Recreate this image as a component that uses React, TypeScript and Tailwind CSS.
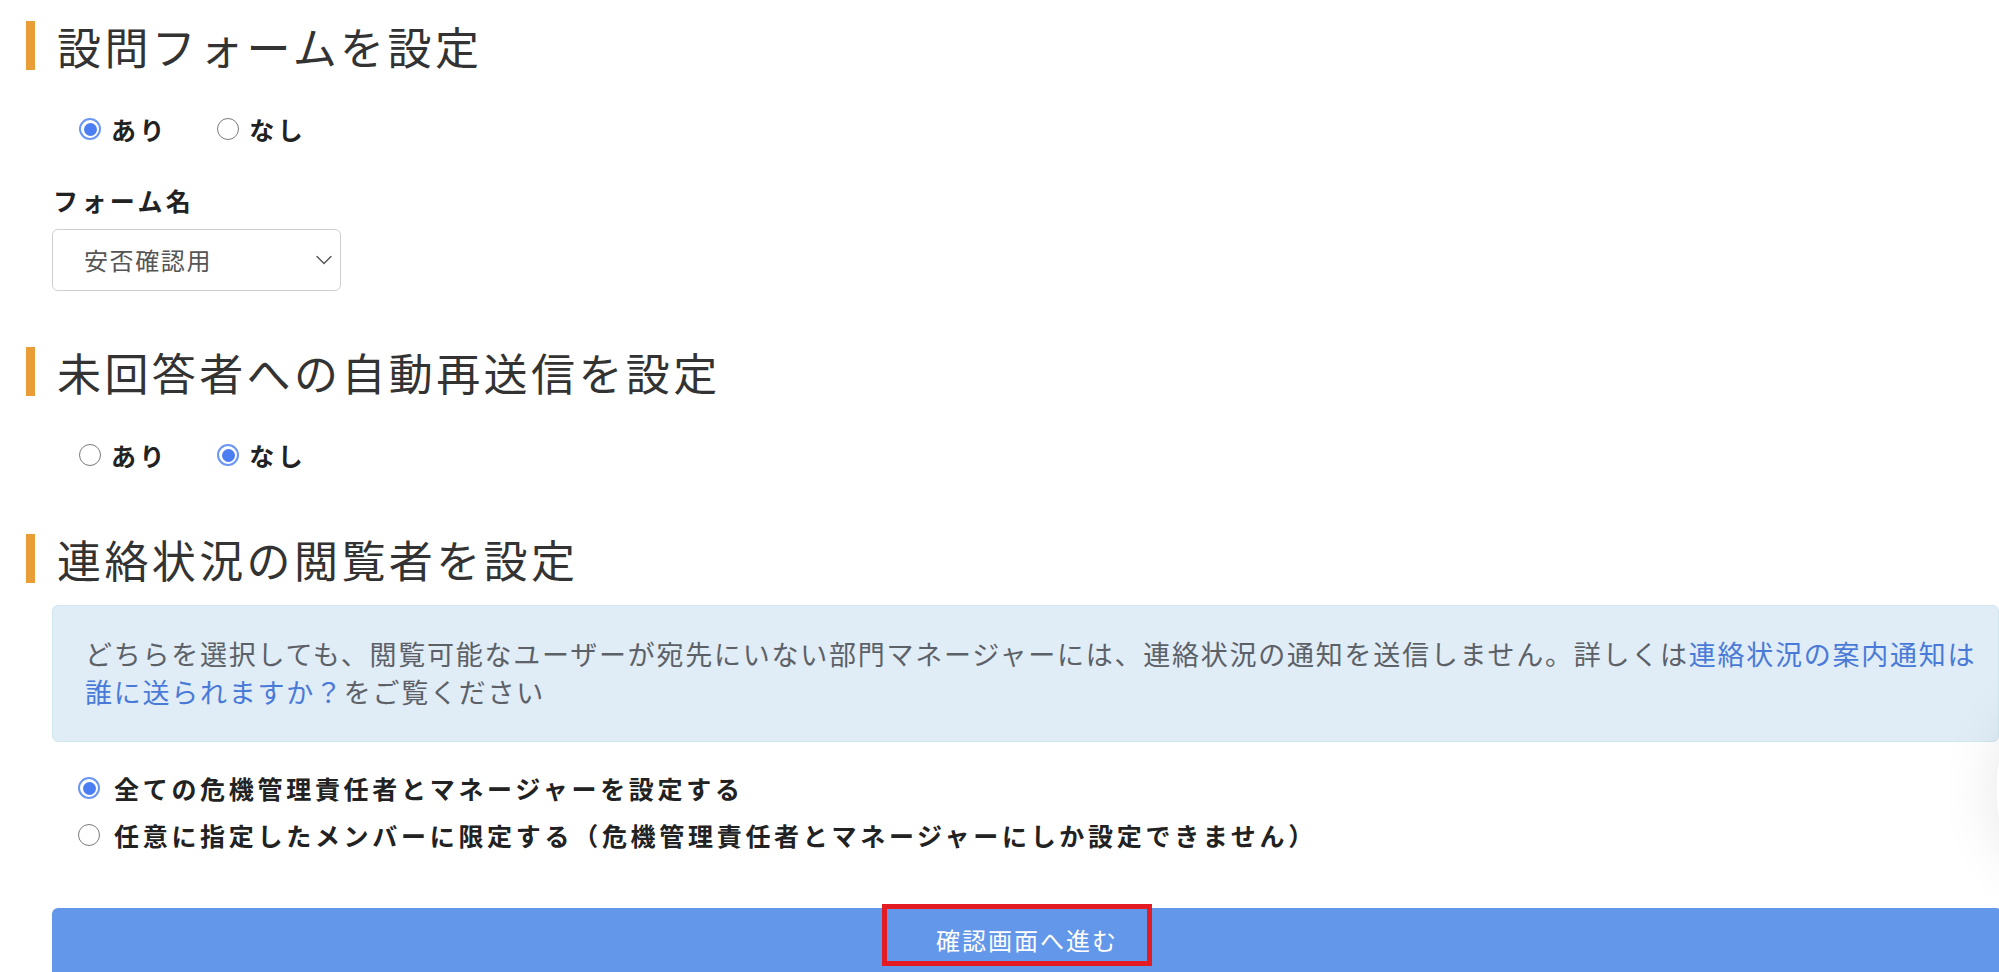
const FONT = "font-['Noto_Sans_CJK_JP','Noto_Sans',sans-serif]";

function SectionTitle({ children, className = '' }: { children: string; className?: string }) {
  return (
    <div className={`flex items-center h-[49px] ${className}`}>
      <div className="w-[9px] h-[49px] ml-[26px] bg-[#e99d36]" />
      <h2 className="ml-[22px] text-[44px] leading-none tracking-[3.4px] font-normal text-[#333333] whitespace-nowrap">
        {children}
      </h2>
    </div>
  );
}

function Radio({ checked }: { checked: boolean }) {
  return checked ? (
    <span className="w-[22px] h-[22px] rounded-full border-2 border-[#6a96f4] bg-white flex items-center justify-center shrink-0">
      <span className="w-[13px] h-[13px] rounded-full bg-[#4b7ef2]" />
    </span>
  ) : (
    <span className="block w-[22px] h-[22px] rounded-full border-[1.5px] border-[#7a7a7a] bg-white shrink-0" />
  );
}

function YesNo({ yes, className = '' }: { yes: boolean; className?: string }) {
  return (
    <div className={`flex items-center h-[24px] pl-[79px] ${className}`}>
      <Radio checked={yes} />
      <span className="ml-[10px] text-[25px] leading-none font-bold tracking-[3.6px] text-[#222]">あり</span>
      <span className="ml-[49px]">
        <Radio checked={!yes} />
      </span>
      <span className="ml-[10px] text-[25px] leading-none font-bold tracking-[3.6px] text-[#222]">なし</span>
    </div>
  );
}

export default function App() {
  return (
    <div className={`relative w-[1999px] h-[972px] overflow-hidden bg-white ${FONT}`}>
      <SectionTitle className="mt-[21px]">設問フォームを設定</SectionTitle>

      <YesNo yes={true} className="mt-[47px]" />

      <div className="mt-[44px] h-[30px] flex items-center pl-[53px]">
        <span className="text-[25px] leading-none font-bold tracking-[3.4px] text-[#222]">フォーム名</span>
      </div>

      <div className="mt-[14px] ml-[52px] w-[289px] h-[62px] rounded-[6px] border border-[#cfcfcf] flex items-center justify-between pl-[31px] pr-[8px]">
        <span className="text-[24px] leading-none tracking-[1.6px] text-[#555]">安否確認用</span>
        <svg width="16" height="10" viewBox="0 0 16 10" fill="none" stroke="#555" strokeWidth="1.4" strokeLinecap="round" strokeLinejoin="round">
          <path d="M1 1.5 L8 8.5 L15 1.5" />
        </svg>
      </div>

      <SectionTitle className="mt-[56px]">未回答者への自動再送信を設定</SectionTitle>

      <YesNo yes={false} className="mt-[47px]" />

      <SectionTitle className="mt-[67px]">連絡状況の閲覧者を設定</SectionTitle>

      <div className="mt-[22px] ml-[52px] w-[1947px] h-[137px] rounded-[6px] border border-[#d2e6ee] bg-[#e0ecf6] pl-[32px] pt-[29px] text-[27px] leading-[38px] tracking-[1.75px] text-[#5c6168]">
        <div className="whitespace-nowrap">
          どちらを選択しても、閲覧可能なユーザーが宛先にいない部門マネージャーには、連絡状況の通知を送信しません。詳しくは
          <span className="text-[#4a7ad8]">連絡状況の案内通知は</span>
        </div>
        <div className="whitespace-nowrap">
          <span className="text-[#4a7ad8]">誰に送られますか？</span>をご覧ください
        </div>
      </div>

      <div className="mt-[34px] flex items-center h-[24px] pl-[78px]">
        <Radio checked={true} />
        <span className="ml-[14px] text-[25px] leading-none font-bold tracking-[3.7px] text-[#222] whitespace-nowrap">
          全ての危機管理責任者とマネージャーを設定する
        </span>
      </div>
      <div className="mt-[23px] flex items-center h-[24px] pl-[78px]">
        <Radio checked={false} />
        <span className="ml-[14px] text-[25px] leading-none font-bold tracking-[3.7px] text-[#222] whitespace-nowrap">
          任意に指定したメンバーに限定する（危機管理責任者とマネージャーにしか設定できません）
        </span>
      </div>

      <div className="relative mt-[61px] ml-[52px] w-[1950px] h-[64px] rounded-t-[6px] bg-[#6397ea] flex items-center justify-center">
        <span className="text-[24px] leading-none tracking-[2px] text-white">確認画面へ進む</span>
        <div className="absolute left-[830px] top-[-4px] w-[270px] h-[62px] border-[5px] border-[#e31c23]" />
      </div>

      <div className="absolute left-[1997px] top-[700px] w-[160px] h-[180px] rounded-full bg-white shadow-[0_0_60px_rgba(0,0,0,0.10)]" />
    </div>
  );
}
